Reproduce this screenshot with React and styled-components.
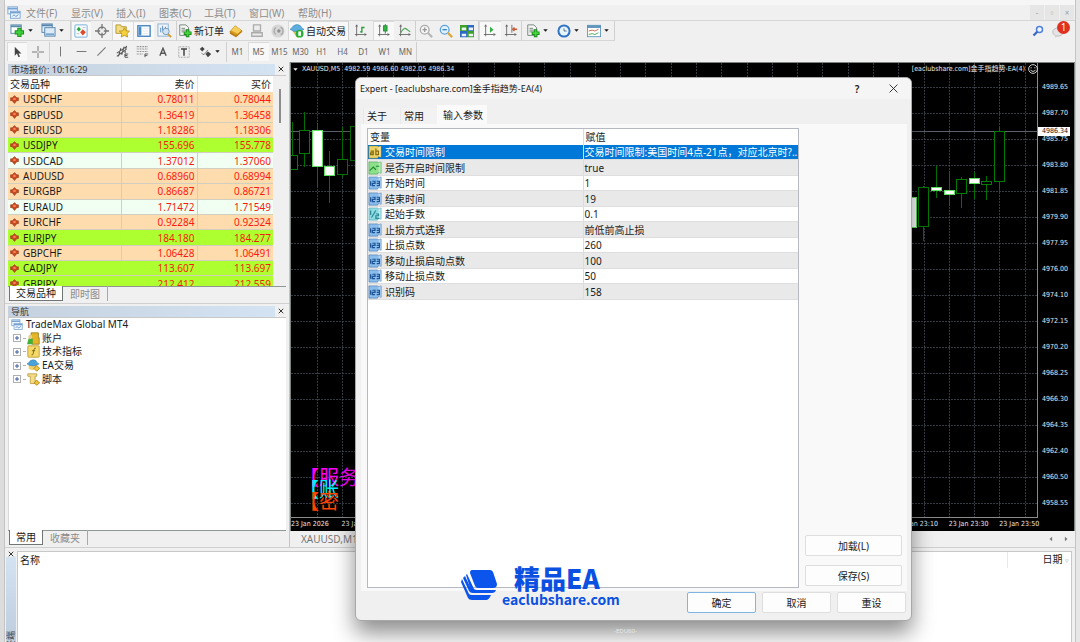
import React from 'react';
import styled, { createGlobalStyle, css } from 'styled-components';

const GlobalStyle = createGlobalStyle`
  * { box-sizing: border-box; }
  body {
    margin: 0;
    background: #e4e4e4;
    color: #1a1a1a;
    font-family: 'Noto Sans', 'Noto Sans CJK SC', sans-serif;
    font-size: 10px;
    line-height: 14px;
    overflow: hidden;
  }
  button { font: inherit; color: inherit; padding: 0; margin: 0; border: 0; background: none; }
  table { border-collapse: collapse; border-spacing: 0; }
  th, td { padding: 0; font-weight: 400; text-align: left; }
  svg { display: block; flex: none; }
`;

const Desktop = styled.div`
  position: relative;
  display: flex;
  height: 100vh;
`;

const WindowEdge = styled.div`
  flex: none;
  width: 5px;
  background: ${p => p.$left ? '#dcdcdc' : '#e6e6e6'};
  border-${p => p.$left ? 'right' : 'left'}: 1px solid #c4c4c4;
`;

const AppWindow = styled.main`
  flex: 1;
  min-width: 0;
  display: flex;
  flex-direction: column;
  background: #f0f0f0;
`;

const TitleStrip = styled.div`
  flex: none;
  height: 5px;
  background: #f6f6f6;
`;

/* ---------- menu and toolbars ---------- */

const MenuBar = styled.nav`
  flex: none;
  display: flex;
  align-items: center;
  height: 16px;
  padding-left: 2px;
  border-bottom: 1px solid #d6d6d6;
`;

const Menus = styled.div`
  flex: 1;
  display: flex;
  padding-left: 5px;
`;

const MenuItem = styled.button`
  width: ${p => p.$width}px;
  color: #8c8c8c;
  text-align: left;
  white-space: nowrap;
`;

const Spacer = styled.div`
  flex: 1;
`;

const CaptionButton = styled.button`
  width: 15px;
  height: 15px;
  background: #e6e6e6;
  border-right: 1px solid #f0f0f0;
  color: #9aa2aa;
  font-size: 8px;
  line-height: 14px;
`;

const Toolbar = styled.div`
  flex: none;
  display: flex;
  align-items: center;
  height: ${p => p.$height}px;
  padding-left: ${p => p.$inset || 0}px;
`;

const Group = styled.div`
  display: flex;
  align-items: center;
  height: 20px;
  padding-right: ${p => p.$pad || 0}px;
  border-right: 1px solid #cfcfcf;
  border-bottom: ${p => p.$flat ? '0' : '1px solid #d6d6d6'};
`;

const Tool = styled.button`
  display: flex;
  align-items: center;
  justify-content: center;
  gap: 2px;
  width: ${p => p.$width || 20}px;
  height: 19px;
  white-space: nowrap;
  color: ${p => p.$muted ? '#666' : '#1a1a1a'};
  font-size: ${p => p.$muted ? 8 : 10}px;
  ${p => p.$on && css`
    background: #f8f8f8;
    box-shadow: inset 1px 1px 0 #dadada;
  `}
`;

const BarIcons = styled.div`
  display: flex;
  align-items: center;
  gap: 7px;
  padding-right: 5px;
`;

const Badge = styled.span`
  position: absolute;
  right: 0;
  top: -3px;
  width: 13px;
  height: 13px;
  border-radius: 50%;
  background: #e03020;
  color: #fff;
  font-size: 10px;
  line-height: 13px;
  text-align: center;
`;

const BadgeHolder = styled.button`
  position: relative;
  width: 18px;
  height: 14px;
  padding-top: 2px;
`;

/* ---------- panels ---------- */

const Workspace = styled.div`
  flex: none;
  display: flex;
  height: 486px;
  border-bottom: 1px solid #cfcfcf;
`;

const Sidebar = styled.aside`
  flex: none;
  display: flex;
  flex-direction: column;
  width: 285px;
  border-right: 1px solid #c4c4c4;
  padding: 1px 3px 0;
`;

const PanelHead = styled.header`
  flex: none;
  display: flex;
  align-items: center;
  height: 13px;
  border-bottom: 1px solid #c8c8c8;
`;

const PanelTitle = styled.h2`
  flex: 1;
  margin: 0;
  padding-left: 3px;
  height: 11px;
  background: linear-gradient(90deg, #c5d1df, #d4e3f2);
  color: #333;
  font-size: 9px;
  font-weight: 400;
  line-height: 11px;
`;

const CloseButton = styled.button`
  width: 11px;
  height: 11px;
  display: flex;
  align-items: center;
  justify-content: center;
`;

const MarketBody = styled.div`
  flex: none;
  display: flex;
  height: 210px;
  overflow: hidden;
`;

const MarketTable = styled.table`
  table-layout: fixed;
  flex: none;
  width: 265px;
  height: 216px;
  background: #fff;
  line-height: 14px;
  thead tr { height: 16px; }
`;

const Quote = styled.tr`
  background: ${p => p.$tone};
  td { border-bottom: 1px solid #d2cfc0; border-right: 1px solid #d2cfc0; }
  td:last-child { border-right: 0; }
`;

const Price = styled.td`
  padding-right: 2px;
  text-align: right;
  color: #fb1a10;
`;

const HeadCell = styled.th`
  padding: 0 2px;
  text-align: ${p => p.$right ? 'right' : 'left'};
  border-right: ${p => p.$line ? '1px solid #e2e2e2' : '0'};
`;

const Pair = styled.span`
  display: flex;
  align-items: center;
  gap: 4px;
  padding-left: 2px;
`;

const ScrollThumb = styled.div`
  width: 2px;
  height: 34px;
  margin: 13px 0 0 6px;
  background: #8c8c8c;
`;

const TabStrip = styled.div`
  flex: none;
  display: flex;
  height: 15px;
  margin-bottom: 2px;
  border-top: 1px solid #8f9894;
`;

const BottomTab = styled.button`
  height: 15px;
  margin-top: -1px;
  padding: 0 7px;
  line-height: 14px;
  ${p => p.$active ? css`
    margin-left: 1px;
    padding: 0 6px;
    background: #fff;
    border: 1px solid #6f7673;
    border-top: 0;
  ` : css`
    color: #8c8c8c;
    border-right: 1px solid #a8a8a8;
  `}
`;

const Divider = styled.div`
  flex: none;
  height: 1px;
  margin: 0 -3px 1px;
  background: #d0d0d0;
`;

const TreeArea = styled.div`
  flex: 1;
  background: #fff;
  border-left: 1px solid #d8d8d8;
`;

const Tree = styled.ul`
  display: flex;
  flex-direction: column;
  height: 68px;
  margin: 0;
  padding: 0 0 0 2px;
  list-style: none;
`;

const TreeRow = styled.li`
  flex: 1;
  display: flex;
  align-items: center;
  gap: ${p => p.$child ? 2 : 3}px;
  min-height: 0;
  padding-left: ${p => p.$child ? 2 : 0}px;
  line-height: 13px;
`;

const Branch = styled.span`
  width: 2px;
  border-top: 1px dotted #b4b4b4;
`;

/* ---------- chart ---------- */

const ChartColumn = styled.section`
  flex: 1;
  min-width: 0;
  display: flex;
  flex-direction: column;
`;

const Chart = styled.div`
  flex: none;
  position: relative;
  display: grid;
  grid-template-columns: minmax(0, 1fr) 36px;
  grid-template-rows: minmax(0, 1fr) 13px;
  height: 469px;
  background: #000;
  border: 1px solid #7c8480;
  border-bottom: 0;
  color: #e8e8e8;
  font-family: 'DejaVu Sans Condensed', 'Noto Sans CJK SC', sans-serif;
  font-size: 7px;
  line-height: 10px;
`;

const Plot = styled.svg`
  width: 100%;
  height: 100%;
  border-right: 1px solid #8b8b8b;
  border-bottom: 1px solid #8b8b8b;
`;

const PriceScale = styled.ol`
  position: relative;
  margin: 0;
  padding: 11px 0 0 4px;
  list-style: none;
  line-height: 26px;
`;

const PriceTag = styled.li`
  position: absolute;
  left: 0;
  top: 64px;
  width: 32px;
  height: 9px;
  padding-left: 4px;
  background: #fff;
  color: #111;
  line-height: 9px;
`;

const TimeScale = styled.div`
  grid-column: 1 / -1;
  display: flex;
  padding-right: 24px;
  line-height: 12px;
  span { flex: 1; min-width: 0; white-space: nowrap; }
`;

const ChartTitle = styled.div`
  position: absolute;
  top: 1px;
  left: 1px;
  right: 36px;
  display: flex;
  align-items: center;
  gap: 3px;
`;

const Overlay = styled.div`
  position: absolute;
  left: 8px;
  top: 409px;
  font-size: 20px;
  line-height: 12px;
`;

const OverlayLine = styled.p`
  margin: 0;
  white-space: nowrap;
  color: ${p => p.$color};
`;

const ChartTabs = styled.div`
  flex: 1;
  display: flex;
  align-items: center;
  gap: 9px;
  padding: 0 6px 0 11px;
  color: #777;
`;

/* ---------- terminal ---------- */

const Terminal = styled.section`
  flex: 1;
  min-height: 0;
  display: flex;
  padding-top: 3px;
`;

const TerminalRail = styled.div`
  flex: none;
  width: 12px;
  display: flex;
  flex-direction: column;
  overflow: hidden;
`;

const RailLabel = styled.div`
  flex: 1;
  margin: 0 1px;
  padding-top: 74px;
  background: linear-gradient(#d4e3f2, #bccbdc);
  color: #444;
  font-size: 9px;
  line-height: 10px;
  span {
    display: block;
    white-space: nowrap;
    writing-mode: vertical-rl;
    text-orientation: sideways;
    transform: rotate(180deg);
  }
`;

const TerminalBody = styled.div`
  flex: 1;
  margin-right: 3px;
  background: #fff;
  border: 1px solid #c8c8c8;
  border-bottom: 0;
`;

const TerminalTable = styled.table`
  width: 100%;
  th { height: 16px; padding: 0 2px; }
  th:last-child { width: 64px; text-align: right; border-left: 1px solid #e8e8e8; }
  span { color: #b0b0b0; font-size: 7px; }
`;

/* ---------- dialog ---------- */

const Dialog = styled.section`
  position: absolute;
  left: 355px;
  top: 77px;
  width: 557px;
  display: flex;
  flex-direction: column;
  background: #f0f0f0;
  border: 1px solid #a8a8a8;
  border-radius: 6px;
  box-shadow: 0 12px 22px rgba(0, 0, 0, 0.45);
  overflow: hidden;
`;

const DialogTitle = styled.header`
  display: flex;
  align-items: center;
  height: 21px;
  padding: 0 12px 0 4px;
  background: #f5f5f5;
  h1 { flex: 1; margin: 0; font-size: 9px; font-weight: 400; }
`;

const HelpButton = styled.button`
  width: 14px;
  margin-right: 24px;
  font-weight: 600;
`;

const DialogTabs = styled.div`
  display: flex;
  align-items: flex-end;
  height: 25px;
  padding-left: 7px;
`;

const DialogTab = styled.button`
  width: ${p => p.$active ? 50 : 37}px;
  height: ${p => p.$active ? 19 : 16}px;
  padding-left: ${p => p.$active ? 5 : 3}px;
  background: ${p => p.$active ? '#fafafa' : '#f2f2f2'};
  border-left: 1px solid ${p => p.$active ? '#fafafa' : '#e9e9e9'};
  text-align: left;
`;

const DialogPage = styled.div`
  display: flex;
  gap: 6px;
  height: 467px;
  margin: 0 4px 0 5px;
  padding: 4px 5px 3px 6px;
  background: #f9f9f9;
`;

const InputsBox = styled.div`
  flex: 1;
  background: #fff;
  border: 1px solid #b5bac2;
`;

const InputsTable = styled.table`
  table-layout: fixed;
  width: 100%;
  height: 171px;
  line-height: 14px;
  thead tr { height: 16px; }
  th:first-child, td:first-child { border-right: 1px solid #dcdcdc; }
  th, td { padding-left: 2px; white-space: nowrap; }
  td:first-child { padding-left: 0; }
  td:last-child { padding-left: 1px; }
`;

const InputRow = styled.tr`
  background: ${p => p.$selected ? '#0078d7' : p.$odd ? '#e9e9e9' : '#fff'};
  color: ${p => p.$selected ? '#fff' : '#1a1a1a'};
  td { border-bottom: 1px solid #dedede; }
`;

const Param = styled.span`
  display: flex;
  align-items: center;
  gap: 3px;
  height: 14px;
`;

const SideButtons = styled.div`
  display: flex;
  flex-direction: column;
  justify-content: flex-end;
  gap: 9px;
  width: 97px;
  padding-bottom: 2px;
`;

const PushButton = styled.button`
  height: 21px;
  width: ${p => p.$wide ? 97 : 69}px;
  background: #fdfdfd;
  border: 1px solid ${p => p.$default ? '#7fb5e3' : '#dedede'};
  border-radius: 2px;
`;

const DialogFooter = styled.footer`
  display: flex;
  justify-content: flex-end;
  gap: 6px;
  height: 29px;
  padding: 1px 5px 0 0;
`;

const Brand = styled.div`
  position: absolute;
  left: 461px;
  top: 564px;
  display: flex;
  align-items: center;
  gap: 4px;
  color: #0b50e0;
  font-family: 'Noto Sans CJK SC', sans-serif;
  font-weight: 700;
`;

const BrandText = styled.div`
  display: flex;
  flex-direction: column;
  align-items: flex-start;
  strong { margin-left: 12px; font-size: 26px; line-height: 28px; }
  span { font-size: 14px; line-height: 14px; }
`;

const Watermark = styled.small`
  position: absolute;
  left: 614px;
  top: 626px;
  color: #e9e9e9;
  font-size: 6px;
  line-height: 10px;
`;

/* ---------- icons ---------- */

const ICONS = {
  app: <><rect x="1" y="1" width="11" height="8" fill="#eef5fc" stroke="#78a4d4" /><path d="M1 3h11" stroke="#78a4d4" strokeWidth="2" /><rect x="4" y="6" width="11" height="8" fill="#eef5fc" stroke="#78a4d4" /><path d="M4 7.5h11" stroke="#78a4d4" strokeWidth="2" /><path d="M6 12l2-2 2 2 3-2" stroke="#4a86c8" fill="none" /></>,
  newChart: <><rect x="1" y="2" width="11" height="9" fill="#fff" stroke="#5a8cab" /><path d="M1 3.5h11" stroke="#5a8cab" strokeWidth="2" /><path d="M10 5v10M5 10h10" stroke="#1c8c1c" strokeWidth="4.500" /><path d="M10 6v8M6 10h8" stroke="#3ed03a" strokeWidth="2.500" /></>,
  profiles: <><rect x="1" y="1" width="11" height="9" fill="#e9f2fa" stroke="#5584ae" /><path d="M1 2.5h11" stroke="#5584ae" strokeWidth="2" /><rect x="4" y="5" width="11" height="9" fill="#dcebf7" stroke="#5584ae" /><path d="M5 12h9" stroke="#7aa5cc" strokeWidth="2" /></>,
  market: <><rect x="1" y="1" width="14" height="14" rx="1" fill="#f6fbff" stroke="#68a9d6" /><path d="M5.500 3l2.500 3-2.500 2.500L3 6z" fill="#28a83a" /><path d="M10 6l3.500 3.500L10 13 7 9.500z" fill="#e04a28" /><path d="M10 4h3M3 11h3" stroke="#b0bcc8" /></>,
  crosshair: <><circle cx="8" cy="8" r="4.500" fill="none" stroke="#777" strokeWidth="1.500" /><path d="M8 0v6M8 10v6M0 8h6M10 8h6" stroke="#777" strokeWidth="1.500" /></>,
  star: <><path d="M1 2h5l1 2h5v7H1z" fill="#f2dc84" stroke="#b69532" /><path d="M10 5l1.700 3.300 3.800.4-2.800 2.600.8 3.700-3.500-1.800L6.600 15l.8-3.700L4.600 8.700l3.800-.4z" fill="#f8d23c" stroke="#b08614" strokeWidth=".8" /></>,
  windowList: <><rect x="1" y="2" width="14" height="12" fill="#fff" stroke="#3d7fbd" strokeWidth="1.500" /><path d="M2 3h3v10H2z" fill="#4a8cc9" /><path d="M7 5h6M7 8h6M7 11h6" stroke="#d8e4ee" /></>,
  tester: <><rect x="1" y="1" width="11" height="13" fill="#eef4fa" stroke="#8cb0d0" /><path d="M4 10V5M6 8V3M9 7V4" stroke="#508ac0" /><circle cx="9.500" cy="9" r="3.500" fill="#cfe3f5" stroke="#7196b8" /><path d="M12 12l3 3" stroke="#d89a28" strokeWidth="2" /></>,
  order: <><path d="M2 1h7l3 3v9H2z" fill="#f4f4f4" stroke="#6a7f74" /><path d="M4 5h4M4 7h5M4 9h3" stroke="#6a7f74" /><path d="M11 6v9M6.500 10.500h9" stroke="#188a1c" strokeWidth="4" /><path d="M11 7v7M7.500 10.500h7" stroke="#46d43c" strokeWidth="2" /></>,
  gold: <><path d="M1 9l6-7 8 6-7 6z" fill="#d99a1c" stroke="#a8710c" strokeWidth=".8" /><path d="M2.500 7.500L7 2l7 5-4 4z" fill="#f6cd58" /><path d="M1 9v2l7 4 7-6V8l-7 5z" fill="#b87c14" /></>,
  printer: <><path d="M4 1h8v7H4zM2 10h12v4H2z" fill="#ececec" stroke="#ababab" strokeWidth="1.500" /></>,
  signal: <><circle cx="8" cy="8" r="7.500" fill="#d6d6d6" /><circle cx="9" cy="8" r="2" fill="#8f8f8f" /><path d="M5.500 4a5 5 0 000 8M11 3.500a5 5 0 010 9" stroke="#a8a8a8" fill="none" strokeWidth="1.500" /></>,
  auto: <><path d="M3 7l5 8 5-4V7z" fill="#f3cd52" stroke="#b08a28" strokeWidth=".6" /><path d="M0 6q2-1 4-4 4-3 8 0 1 3 4 4-8 6-16 0z" fill="#5cade0" stroke="#3580b0" strokeWidth=".6" /><circle cx="11" cy="11" r="4.500" fill="#28ae34" /><path d="M9.500 8.500h3v5h-3z" fill="#fff" /></>,
  bars: <><path d="M3 1v13M1 12h13M2 3l1-2 1 2M12 11l2 1-2 1" stroke="#666" fill="none" /><path d="M9 3v7M7 9h2M9 4h3" stroke="#2a9a38" strokeWidth="1.500" /></>,
  candles: <><path d="M3 1v13M1 12h13M2 3l1-2 1 2M12 11l2 1-2 1" stroke="#666" fill="none" /><path d="M9.500 0v11" stroke="#26863a" /><rect x="7.500" y="2" width="4" height="6" fill="#2fb840" stroke="#26863a" /></>,
  line: <><path d="M3 1v13M1 12h13M2 3l1-2 1 2M12 11l2 1-2 1" stroke="#666" fill="none" /><path d="M3 10c3-5 5-6 7-4l4 3" stroke="#4ca65a" fill="none" strokeWidth="1.300" /></>,
  zoomIn: <><circle cx="6.500" cy="6.500" r="5" fill="#f4f4f4" stroke="#ababab" strokeWidth="1.500" /><path d="M4 6.500h5M6.500 4v5" stroke="#999" strokeWidth="1.500" /><path d="M10 10l5 5" stroke="#b8b8b8" strokeWidth="2.500" /></>,
  zoomOut: <><circle cx="6.500" cy="6.500" r="5" fill="#e2f2fd" stroke="#5ea3dc" strokeWidth="1.500" /><path d="M4 6.500h5" stroke="#3583c0" strokeWidth="1.500" /><path d="M10 10l5 5" stroke="#dba63a" strokeWidth="2.500" /></>,
  tile: <><path d="M0 1h8v7H0zM8 8h8v7H8z" fill="#3da028" /><path d="M8 1h8v7H8zM0 8h8v7H0z" fill="#2e6ac4" /><path d="M2 4h5v3H2zM10 4h5v3h-5zM2 11h5v3H2zM10 11h5v3h-5z" fill="#eaf4f4" /></>,
  scroll: <><path d="M3 1v13M1 12h13M2 3l1-2 1 2M12 11l2 1-2 1" stroke="#666" /><path d="M8 3v7l4-3.500z" fill="#2fb040" /></>,
  shift: <><path d="M3 1v13M1 12h13M9 1v9M2 3l1-2 1 2M12 11l2 1-2 1" stroke="#666" /><path d="M10 6h5M12 4l-2 2 2 2" stroke="#c85a34" strokeWidth="1.500" /></>,
  clock: <><circle cx="8" cy="8" r="7.500" fill="#2f74c4" /><circle cx="8" cy="8" r="5.200" fill="#eaf4fd" /><path d="M8 5v3h3" stroke="#47637c" fill="none" /></>,
  template: <><rect x="0.500" y="1.500" width="15" height="13" fill="#fff" stroke="#5c94bc" /><path d="M0 3h16" stroke="#5c94bc" strokeWidth="3" /><path d="M2 8l4-1 3 1 4-2" stroke="#c85a3a" fill="none" /><path d="M2 12l4-1 3 1 4-2" stroke="#38a048" fill="none" /></>,
  cursor: <path d="M5 1v12l3-3 2 5 2-1-2-4h4z" fill="#444" />,
  cross: <path d="M8 0v7M8 9v7M0 8h7M9 8h7" stroke="#777" strokeWidth="1.300" />,
  vline: <path d="M8 2v12" stroke="#777" strokeWidth="1.300" />,
  hline: <path d="M2 8h12" stroke="#777" strokeWidth="1.300" />,
  trend: <path d="M3 13L13 3" stroke="#777" strokeWidth="1.300" />,
  channel: <path d="M1 10l12-8M1 14l12-9M3 14l3-10M7 12l3-10M11 10l2-9M11 11h4M11 13h3M11 15h4M11 11v4" stroke="#555" strokeWidth="1.300" />,
  fibo: <><path d="M1 2h13M1 5h13M1 8h13M1 11h8" stroke="#777" strokeDasharray="1 1" strokeWidth="1.300" /><path d="M11 15v-4h4M11 13h3" stroke="#444" fill="none" /></>,
  letter: <path d="M3 14L8 2l5 12M5 10h6" stroke="#555" strokeWidth="2.200" fill="none" />,
  label: <><rect x="1" y="1" width="14" height="14" fill="none" stroke="#777" strokeDasharray="1 1" /><path d="M4 4h8M8 4v9" stroke="#444" strokeWidth="2" /></>,
  shapes: <><path d="M1 5l3-3 3 3-3 3zM8 11l3-3 4 3-4 4z" fill="#444" /><path d="M3 10l3 2 5-6" stroke="#666" fill="none" /></>,
  search: <><circle cx="10" cy="6" r="4" fill="#f2f8ff" stroke="#4f7fd8" strokeWidth="2" /><path d="M7 9l-5 5" stroke="#3966c4" strokeWidth="3" /></>,
  chat: <><ellipse cx="8" cy="8" rx="7" ry="5.500" fill="#e4e4e6" stroke="#b0b0b0" /><path d="M4 12v4l4-3" fill="#d2d2d2" /></>,
  down: <><path d="M8 1l4 4h3v5h-3l-4 5-4-5H1V5h3z" fill="#c9481f" stroke="#8d3c20" /><path d="M6 5h4v4H6z" fill="#ff8458" /></>,
  accounts: <><path d="M5 1h9v6h1v8H6V8H5z" fill="#e4b526" stroke="#9b7a1c" /><path d="M2 8q3-2 5 1v6H0z" fill="#42b03a" /><circle cx="4" cy="6" r="2.500" fill="#e3d08c" /></>,
  indicator: <><rect x="1" y="1" width="14" height="14" rx="1" fill="#f5d969" stroke="#b89628" /><path d="M11 4q-2-1-2.500 2l-1 5q-.5 2-2 1M6 7h4" stroke="#6d5510" fill="none" /></>,
  expert: <><path d="M2 7h9v5q-4 3-9 0z" fill="#f0d06a" /><path d="M0 6q2-1 4-4 4-2 7 0 1 3 4 4-8 5-15 0z" fill="#4aa2dc" stroke="#3078a8" strokeWidth=".6" /><path d="M12 8l3.500 3.500L12 15l-3.500-3.500z" fill="#f2c53c" stroke="#a87c14" /></>,
  script: <><path d="M1 1h11v3h-2v6h2v3H4V4H1z" fill="#f4dc88" stroke="#b79a3c" /><path d="M12 9l3.500 3L12 15l-3.500-3z" fill="#f2c53c" stroke="#a87c14" /></>,
  plus: <><rect x="1" y="1" width="14" height="14" fill="#fff" stroke="#b0b0b0" strokeWidth="2" /><path d="M8 4v8M4 8h8" stroke="#3f5d9e" strokeWidth="2" /></>,
  x: <path d="M2 2l12 12M14 2L2 14" stroke="#222" strokeWidth="2.400" />,
  thinX: <path d="M1 1l14 14M15 1L1 15" stroke="#222" strokeWidth="1.600" />,
  smile: <><circle cx="8" cy="8" r="7" fill="none" stroke="#ddd" strokeWidth="1.500" /><path d="M5 5v2M11 5v2M4 10q4 4 8 0" stroke="#ddd" strokeWidth="1.500" fill="none" /></>,
  caret: <path d="M3 5h10l-5 6z" fill="currentColor" />,
  prev: <path d="M11 2v12L4 8z" fill="#777" />,
  next: <path d="M5 2v12l7-6z" fill="#777" />,
};

function Icon({ name, size = 14 }) {
  return <svg width={size} height={size} viewBox="0 0 16 16" fill="none" aria-hidden="true">{ICONS[name]}</svg>;
}

const TYPES = {
  string: ['#ead46a', '#8a6c12', <path d="M3 7h3v4H3V9h3M9 4v7h3V7H9" />],
  bool: ['#8ce08a', '#1f8a2c', <path d="M2 11l4-4 3 3M9 6h4" />],
  int: ['#8abcec', '#1c5496', <path d="M3 6v5M5 6h3v2.500H5V11h3M10 6h3v5h-3M10 8.500h3" />],
  double: ['#8edbe2', '#2a8a98', <path d="M3 4v5M4 12l5-8M9 8h3v2H9v3h4" />],
};

function TypeIcon({ type }) {
  const [fill, stroke, glyph] = TYPES[type];
  return (
    <svg width="14" height="14" viewBox="0 0 16 16" aria-hidden="true">
      <path d="M1 1h10l1 1 3-1v13l-3-1-1 2H1z" fill={fill} stroke={stroke} strokeWidth=".5" />
      <path d="M12 2v11l2.500 1V1z" fill="#fff" opacity=".4" />
      <g fill="none" stroke={stroke} strokeWidth="1.400">{glyph}</g>
    </svg>
  );
}

/* ---------- data ---------- */

const PEACH = '#ffdcad';
const LIME = '#adff2f';
const MINT = '#f0fff2';

const quotes = [
  ['USDCHF', '0.78011', '0.78044', PEACH],
  ['GBPUSD', '1.36419', '1.36458', PEACH],
  ['EURUSD', '1.18286', '1.18306', PEACH],
  ['USDJPY', '155.696', '155.778', LIME],
  ['USDCAD', '1.37012', '1.37060', MINT],
  ['AUDUSD', '0.68960', '0.68994', PEACH],
  ['EURGBP', '0.86687', '0.86721', PEACH],
  ['EURAUD', '1.71472', '1.71549', MINT],
  ['EURCHF', '0.92284', '0.92324', PEACH],
  ['EURJPY', '184.180', '184.277', LIME],
  ['GBPCHF', '1.06428', '1.06491', PEACH],
  ['CADJPY', '113.607', '113.697', LIME],
  ['GBPJPY', '212.412', '212.559', LIME],
];

const params = [
  ['交易时间限制', '交易时间限制:美国时间4点-21点，对应北京时?..', 'string'],
  ['是否开启时间限制', 'true', 'bool'],
  ['开始时间', '1', 'int'],
  ['结束时间', '19', 'int'],
  ['起始手数', '0.1', 'double'],
  ['止损方式选择', '前低前高止损', 'int'],
  ['止损点数', '260', 'int'],
  ['移动止损启动点数', '100', 'int'],
  ['移动止损点数', '50', 'int'],
  ['识别码', '158', 'int'],
];

const menus = [
  ['文件(F)', 45], ['显示(V)', 45], ['插入(I)', 43], ['图表(C)', 45],
  ['工具(T)', 45], ['窗口(W)', 49], ['帮助(H)', 45],
];

const treeItems = [
  ['账户', 'accounts'], ['技术指标', 'indicator'], ['EA交易', 'expert'], ['脚本', 'script'],
];

const prices = [
  '4989.65', '4987.70', '4985.75', '4983.80', '4981.85', '4979.90', '4977.95', '4976.00', '4974.10',
  '4972.15', '4970.20', '4968.25', '4966.30', '4964.35', '4962.40', '4960.50', '4958.55',
];

const times = [
  '2026', '19:30', '19:50', '20:10', '20:30', '20:50', '21:10', '21:30',
  '21:50', '22:10', '22:30', '22:50', '23:10', '23:30', '23:50',
];

// x, high, top, bottom, low, filled
const candles = [
  [1, 59, 92, 106, 106, false],
  [13, 49, 67, 90, 104, false],
  [26, 60, 67, 103, 124, true],
  [38, 88, 103, 112, 140, true],
  [51, 64, 96, 111, 114, false],
  [64, 60, 63, 97, 104, false],
  [620, 110, 134, 164, 164, true],
  [632, 123, 124, 163, 178, false],
  [645, 103, 124, 127, 135, true],
  [658, 109, 127, 131, 143, true],
  [670, 114, 116, 130, 145, false],
  [683, 109, 115, 120, 136, true],
  [695, 113, 118, 121, 137, false],
  [708, 64, 68, 118, 126, false],
];

function PriceChart() {
  return (
    <Plot aria-label="XAUUSD,M5">
      <g stroke="#47505a" strokeDasharray="2 1" shapeRendering="crispEdges">
        {Array.from({ length: 29 }, (_, i) => {
          const x = Math.round(25.8 + i * 25.28);
          return <line key={i} x1={x} x2={x} y1="0" y2="100%" opacity=".75" />;
        })}
        {prices.map((price, i) => (
          <line key={price} x1="0" x2="100%" y1={24 + i * 26} y2={24 + i * 26} opacity=".75" />
        ))}
      </g>
      <line x1="0" x2="100%" y1="68" y2="68" stroke="#5c636d" shapeRendering="crispEdges" />
      <g shapeRendering="crispEdges">
        {candles.map(([x, high, top, bottom, low, filled]) => (
          <g key={x} stroke={filled ? '#5fe05f' : '#007c00'}>
            <path d={`M${x} ${high}V${low}`} stroke="#007000" />
            <rect x={x - 5} y={top} width="10" height={bottom - top} fill={filled ? '#fff' : '#000'} />
          </g>
        ))}
      </g>
    </Plot>
  );
}

function Toolbars() {
  return (
    <>
      <Toolbar $height={20}>
        <Group $pad={2}>
          <Tool $width={33} aria-label="new chart"><Icon name="newChart" size={15} /><Icon name="caret" size={7} /></Tool>
          <Tool $width={30} aria-label="profiles"><Icon name="profiles" size={15} /><Icon name="caret" size={7} /></Tool>
        </Group>
        <Group $pad={2}>
          <Tool $on aria-label="market watch"><Icon name="market" /></Tool>
          <Tool $width={21} aria-label="data window"><Icon name="crosshair" /></Tool>
          <Tool $on $width={21} aria-label="navigator"><Icon name="star" size={15} /></Tool>
          <Tool $on $width={21} aria-label="terminal"><Icon name="windowList" /></Tool>
          <Tool aria-label="tester"><Icon name="tester" size={15} /></Tool>
        </Group>
        <Group>
          <Tool $width={48}><Icon name="order" />新订单</Tool>
          <Tool $width={21} aria-label="metaeditor"><Icon name="gold" /></Tool>
          <Tool $width={21} aria-label="print"><Icon name="printer" /></Tool>
          <Tool $width={21} aria-label="signals"><Icon name="signal" /></Tool>
          <Tool $on $width={60}><Icon name="auto" />自动交易</Tool>
        </Group>
        <Group>
          <Tool $width={24} aria-label="bar chart"><Icon name="bars" /></Tool>
          <Tool $on $width={21} aria-label="candlesticks"><Icon name="candles" /></Tool>
          <Tool $width={21} aria-label="line chart"><Icon name="line" /></Tool>
        </Group>
        <Group>
          <Tool aria-label="zoom in"><Icon name="zoomIn" /></Tool>
          <Tool aria-label="zoom out"><Icon name="zoomOut" /></Tool>
          <Tool $width={22} aria-label="tile windows"><Icon name="tile" /></Tool>
        </Group>
        <Group>
          <Tool $on $width={22} aria-label="auto scroll"><Icon name="scroll" /></Tool>
          <Tool aria-label="chart shift"><Icon name="shift" /></Tool>
        </Group>
        <Group>
          <Tool $width={31} aria-label="indicators"><Icon name="order" /><Icon name="caret" size={7} /></Tool>
          <Tool $width={30} aria-label="periods"><Icon name="clock" /><Icon name="caret" size={7} /></Tool>
          <Tool $width={31} aria-label="templates"><Icon name="template" /><Icon name="caret" size={7} /></Tool>
        </Group>
        <Spacer />
        <BarIcons>
          <Tool $width={14} aria-label="search"><Icon name="search" size={12} /></Tool>
          <BadgeHolder aria-label="messages"><Icon name="chat" size={12} /><Badge>1</Badge></BadgeHolder>
        </BarIcons>
      </Toolbar>
      <Toolbar $height={21} $inset={2}>
        <Group $flat>
          <Tool $on aria-label="cursor"><Icon name="cursor" size={12} /></Tool>
          <Tool $width={22} aria-label="crosshair"><Icon name="cross" size={12} /></Tool>
        </Group>
        <Group $flat>
          <Tool $width={21} aria-label="vertical line"><Icon name="vline" size={13} /></Tool>
          <Tool aria-label="horizontal line"><Icon name="hline" size={13} /></Tool>
          <Tool $width={21} aria-label="trend line"><Icon name="trend" size={13} /></Tool>
          <Tool aria-label="channel"><Icon name="channel" size={13} /></Tool>
          <Tool $width={21} aria-label="fibonacci"><Icon name="fibo" size={13} /></Tool>
          <Tool aria-label="text"><Icon name="letter" size={10} /></Tool>
          <Tool $width={21} aria-label="label"><Icon name="label" size={12} /></Tool>
          <Tool $width={32} aria-label="arrows"><Icon name="shapes" size={13} /><Icon name="caret" size={7} /></Tool>
        </Group>
        <Group $flat>
          {['M1', 'M5', 'M15', 'M30', 'H1', 'H4', 'D1', 'W1', 'MN'].map(label => (
            <Tool key={label} $muted $on={label === 'M5'} $width={21}>{label}</Tool>
          ))}
        </Group>
      </Toolbar>
    </>
  );
}

function MarketWatch() {
  return (
    <>
      <PanelHead>
        <PanelTitle>市场报价: 10:16:29</PanelTitle>
        <CloseButton aria-label="close"><Icon name="x" size={6} /></CloseButton>
      </PanelHead>
      <MarketBody>
        <MarketTable>
          <colgroup><col width="113" /><col width="76" /><col width="76" /></colgroup>
          <thead>
            <tr><HeadCell $line>交易品种</HeadCell><HeadCell $right $line>卖价</HeadCell><HeadCell $right>买价</HeadCell></tr>
          </thead>
          <tbody>
            {quotes.map(([symbol, bid, ask, tone]) => (
              <Quote key={symbol} $tone={tone}>
                <td><Pair><Icon name="down" size={9} />{symbol}</Pair></td>
                <Price>{bid}</Price>
                <Price>{ask}</Price>
              </Quote>
            ))}
          </tbody>
        </MarketTable>
        <ScrollThumb />
      </MarketBody>
      <TabStrip>
        <BottomTab $active>交易品种</BottomTab>
        <BottomTab>即时图</BottomTab>
      </TabStrip>
    </>
  );
}

function Navigator() {
  return (
    <>
      <PanelHead>
        <PanelTitle>导航</PanelTitle>
        <CloseButton aria-label="close"><Icon name="x" size={6} /></CloseButton>
      </PanelHead>
      <TreeArea>
        <Tree>
          <TreeRow><Icon name="app" size={12} />TradeMax Global MT4</TreeRow>
          {treeItems.map(([label, icon]) => (
            <TreeRow $child key={label}><Icon name="plus" size={8} /><Branch /><Icon name={icon} size={13} />{label}</TreeRow>
          ))}
        </Tree>
      </TreeArea>
      <TabStrip>
        <BottomTab $active>常用</BottomTab>
        <BottomTab>收藏夹</BottomTab>
      </TabStrip>
    </>
  );
}

function ExpertDialog() {
  return (
    <Dialog role="dialog" aria-labelledby="expert-title">
      <DialogTitle>
        <h1 id="expert-title">Expert - [eaclubshare.com]金手指趋势-EA(4)</h1>
        <HelpButton>?</HelpButton>
        <CloseButton aria-label="close"><Icon name="thinX" size={9} /></CloseButton>
      </DialogTitle>
      <DialogTabs>
        <DialogTab>关于</DialogTab>
        <DialogTab>常用</DialogTab>
        <DialogTab $active>输入参数</DialogTab>
      </DialogTabs>
      <DialogPage>
        <InputsBox>
          <InputsTable>
            <colgroup><col width="215" /><col /></colgroup>
            <thead><tr><th>变量</th><th>赋值</th></tr></thead>
            <tbody>
              {params.map(([name, value, type], index) => (
                <InputRow key={name} $selected={index === 0} $odd={index % 2 === 1}>
                  <td><Param><TypeIcon type={type} />{name}</Param></td>
                  <td>{value}</td>
                </InputRow>
              ))}
            </tbody>
          </InputsTable>
        </InputsBox>
        <SideButtons>
          <PushButton $wide>加载(L)</PushButton>
          <PushButton $wide>保存(S)</PushButton>
        </SideButtons>
      </DialogPage>
      <DialogFooter>
        <PushButton $default>确定</PushButton>
        <PushButton>取消</PushButton>
        <PushButton>重设</PushButton>
      </DialogFooter>
    </Dialog>
  );
}

function App() {
  return (
    <Desktop>
      <GlobalStyle />
      <WindowEdge $left />
      <AppWindow>
        <TitleStrip />
        <MenuBar>
          <Icon name="app" size={14} />
          <Menus>
            {menus.map(([label, width]) => <MenuItem key={label} $width={width}>{label}</MenuItem>)}
          </Menus>
          <CaptionButton aria-label="minimize">-</CaptionButton>
          <CaptionButton aria-label="restore">▫</CaptionButton>
          <CaptionButton aria-label="close">×</CaptionButton>
        </MenuBar>
        <Toolbars />
        <Workspace>
          <Sidebar>
            <MarketWatch />
            <Divider />
            <Navigator />
          </Sidebar>
          <ChartColumn>
            <Chart>
              <PriceChart />
              <PriceScale>
                {prices.map(price => <li key={price}>{price}</li>)}
                <PriceTag>4986.34</PriceTag>
              </PriceScale>
              <TimeScale>
                {times.map(time => <span key={time}>23 Jan {time}</span>)}
              </TimeScale>
              <ChartTitle>
                <Icon name="caret" size={7} />
                <span>XAUUSD,M5&nbsp; 4982.59 4986.60 4982.05 4986.34</span>
                <Spacer />
                <span>[eaclubshare.com]金手指趋势-EA(4)</span>
                <Icon name="smile" size={10} />
              </ChartTitle>
              <Overlay>
                <OverlayLine $color="#ff00ff">【服务</OverlayLine>
                <OverlayLine $color="#00f0ff">【账</OverlayLine>
                <OverlayLine $color="#ff4500">【密</OverlayLine>
              </Overlay>
            </Chart>
            <ChartTabs>
              <span>XAUUSD,M15</span>
              <Spacer />
              <Icon name="prev" size={6} />
              <Icon name="next" size={6} />
            </ChartTabs>
          </ChartColumn>
        </Workspace>
        <Terminal>
          <TerminalRail>
            <CloseButton aria-label="close"><Icon name="x" size={6} /></CloseButton>
            <RailLabel><span>终端</span></RailLabel>
          </TerminalRail>
          <TerminalBody>
            <TerminalTable>
              <thead><tr><th>名称</th><th>日期 <span>▿</span></th></tr></thead>
            </TerminalTable>
          </TerminalBody>
        </Terminal>
      </AppWindow>
      <WindowEdge />
      <ExpertDialog />
      <Brand>
        <svg width="37" height="32" viewBox="0 0 37 32" fill="#0b55ec" aria-hidden="true">
          <path d="M11 1h18q2 0 3 2l4 12q0 4-4 4H17q-2 0-3-2L9 4q0-3 2-3z" />
          <path d="M5 6l1-1 7 15q1 1 3 1h19q-1 3-4 3H14q-3 0-4-2z" />
          <path d="M0 13l1-3 7 15q1 1 3 1h19q-2 5-5 5H11q-3 0-4-2z" />
          <path d="M2 9l2-2 7 15q1 1 3 1h2v1h-4q-3 0-4-2z" />
        </svg>
        <BrandText>
          <strong>精品EA</strong>
          <span>eaclubshare.com</span>
        </BrandText>
      </Brand>
      <Watermark>-EDU60-</Watermark>
    </Desktop>
  );
}

export default App;
